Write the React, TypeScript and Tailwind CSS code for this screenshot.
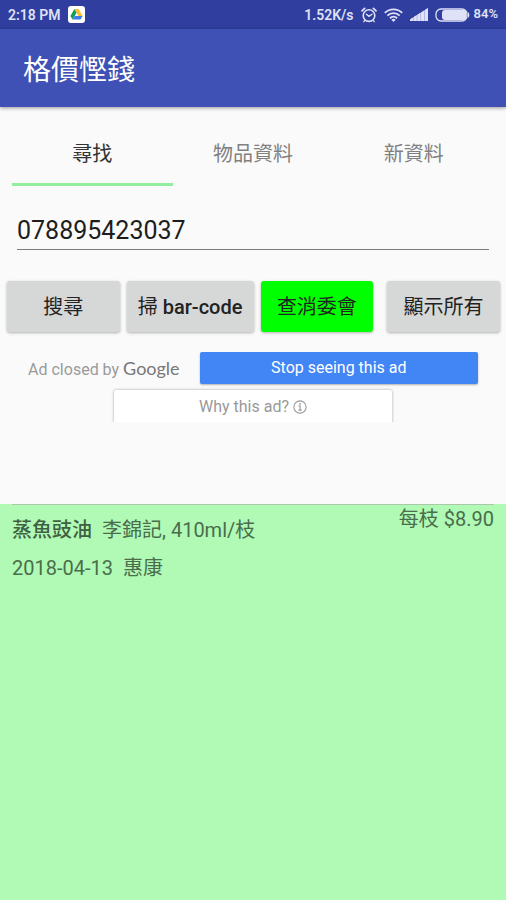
import React, { useState } from 'react';

const tabs = ['尋找', '物品資料', '新資料'];

const DriveIcon = () => (
  <svg className="h-[17px] w-[17px]" viewBox="0 0 17 17" aria-hidden="true">
    <rect width="17" height="17" rx="3" fill="#fff" />
    <path d="M6.4 3h4.2l4 7h-4.2z" fill="#fbc02d" />
    <path d="M6.4 3l2.1 3.7-3.9 6.8L2.4 10z" fill="#129d5a" />
    <path d="M6.6 10h8l-2.1 3.5H4.6z" fill="#3f7ee8" />
  </svg>
);

const AlarmIcon = () => (
  <svg className="h-4 w-4" viewBox="0 0 16 16" fill="none" stroke="currentColor" strokeLinecap="round" aria-hidden="true">
    <circle cx="8" cy="8.6" r="5.8" strokeWidth="1.6" />
    <path d="M1 3.8L3.6 1.4M15 3.8L12.4 1.4" strokeWidth="1.8" />
    <path d="M5.4 7.2L8 9.4l3-2.2" strokeWidth="1.4" />
    <path d="M3.8 13.4l-1 1.2M12.2 13.4l1 1.2" strokeWidth="1.4" />
  </svg>
);

const WifiIcon = () => (
  <svg className="h-[14px] w-[19px]" viewBox="0 0 19 14" fill="none" stroke="currentColor" strokeWidth="1.9" aria-hidden="true">
    <path d="M0.8 4.9a12.4 12.4 0 0 1 17.4 0" />
    <path d="M3.4 7.6a8.7 8.7 0 0 1 12.2 0" />
    <path d="M6 10.2a5 5 0 0 1 7 0" />
    <path d="M9.5 14L7.4 11.8a3 3 0 0 1 4.2 0z" fill="currentColor" stroke="none" />
  </svg>
);

const SignalIcon = () => (
  <svg className="h-[13px] w-[18px]" viewBox="0 0 18 13" fill="currentColor" aria-hidden="true">
    <path d="M0 13v-1.6L18 0v13z" opacity="0.65" />
    <path d="M0 11.4l3-1.9V13H0zM3.7 9l3-1.9V13h-3zM7.4 6.7l3-1.9V13h-3zM11.1 4.4l3-1.9V13h-3zM14.8 2L18 0v13h-3.2z" />
  </svg>
);

const BatteryIcon = () => (
  <svg className="h-[14px] w-[35px]" viewBox="0 0 35 14" aria-hidden="true">
    <rect x="1" y="1" width="31" height="12" rx="5" fill="none" stroke="currentColor" strokeWidth="1.3" />
    <rect x="7" y="2" width="24.4" height="10" rx="3" fill="currentColor" />
    <path d="M32.8 4c2 1.2 2 4.8 0 6z" fill="currentColor" />
  </svg>
);

const InfoIcon = () => (
  <svg className="h-[14px] w-[14px]" viewBox="0 0 13 13" fill="none" stroke="currentColor" aria-hidden="true">
    <circle cx="6.5" cy="6.5" r="5.7" />
    <path d="M5.2 5.7h1.5v3.6M5 9.4h3.2" />
    <circle cx="6.5" cy="3.7" r="0.8" fill="currentColor" stroke="none" />
  </svg>
);

const StatusBar: React.FC = () => (
  <div className="flex h-[29px] items-center justify-between bg-[#303f9f] px-2 text-sm font-semibold text-[#dfe1f6]">
    <div className="flex items-center gap-[7px]">
      <span>2:18 PM</span>
      <DriveIcon />
    </div>
    <div className="flex items-center gap-[7px]">
      <span>1.52K/s</span>
      <AlarmIcon />
      <WifiIcon />
      <SignalIcon />
      <div className="flex items-center gap-1">
        <BatteryIcon />
        <span className="text-[13px]">84%</span>
      </div>
    </div>
  </div>
);

const actionBase = 'h-[51px] rounded-[3px] text-xl text-[#222] whitespace-nowrap shadow-[0_1px_3px_rgba(0,0,0,0.3)]';

const App: React.FC = () => {
  const [active, setActive] = useState(0);
  const [query, setQuery] = useState('078895423037');

  return (
    <div className="flex min-h-screen flex-col bg-[#fafafa] font-[Roboto,'Noto_Sans_CJK_TC',sans-serif]">
      <StatusBar />
      <header className="flex h-[78px] items-center bg-[#3f51b5] px-[23px] pt-[6px] shadow-[0_1px_4px_rgba(0,0,0,0.4)]">
        <h1 className="text-[28px] leading-8 text-white">格價慳錢</h1>
      </header>

      <nav className="mx-3 mt-3 grid grid-cols-3">
        {tabs.map((tab, i) => (
          <button
            key={tab}
            type="button"
            onClick={() => setActive(i)}
            className={`h-[67px] border-b-[3px] pt-[6px] text-xl ${
              active === i ? 'border-[#90ee9c] text-[#333]' : 'border-transparent text-[#808080]'
            }`}
          >
            {tab}
          </button>
        ))}
      </nav>

      <div className="mt-6 px-[17px]">
        <input
          type="text"
          aria-label="尋找"
          value={query}
          onChange={(e) => setQuery(e.target.value)}
          className="h-10 w-full border-b border-[#7d7d7d] bg-transparent pt-[2px] text-[25px] text-[#1d1d1d] outline-none"
        />
      </div>

      <div className="mt-[31px] grid grid-cols-[16fr_18fr_16fr_17fr] gap-[7px] pr-[6px] pl-[7px]">
        <button type="button" className={`${actionBase} bg-[#d6d7d7]`}>搜尋</button>
        <button type="button" className={`${actionBase} bg-[#d6d7d7]`}>
          掃 <span className="font-medium">bar-code</span>
        </button>
        <button type="button" className={`${actionBase} bg-[#00ff00]`}>查消委會</button>
        <button type="button" className={`${actionBase} ml-[7px] bg-[#d6d7d7]`}>顯示所有</button>
      </div>

      <section className="mt-5 h-[70px] overflow-hidden">
        <div className="flex items-center justify-center gap-5">
          <p className="flex items-baseline gap-1 text-base text-[#9a9a9a]">
            Ad closed by
            <span className="font-[Lato,sans-serif] text-lg leading-7 text-[#777]">Google</span>
          </p>
          <button type="button" className="h-8 w-[55%] rounded-[2px] bg-[#4285f4] text-base text-white shadow-[0_1px_2px_rgba(0,0,0,0.3)]">
            Stop seeing this ad
          </button>
        </div>
        <button type="button" className="mx-auto mt-[6px] flex h-9 w-[55%] items-center justify-center gap-1 rounded-[2px] bg-white pb-[2px] text-base text-[#999] shadow-[0_0_3px_rgba(0,0,0,0.35)]">
          Why this ad?
          <InfoIcon />
        </button>
      </section>

      <main className="mt-[82px] flex-1 bg-[#b0fab5] text-xl text-[#4a6d4c]">
        <article className="mx-3 border-t border-[#a9c9aa]">
          <div className="flex items-start justify-between">
            <p className="mt-[9px] leading-8">
              <span className="mr-[10px] font-medium text-[#3f6141]">蒸魚豉油</span>
              李錦記, 410ml/枝
            </p>
            <p className="leading-7">每枝 $8.90</p>
          </div>
          <p className="mt-[6px] leading-8">
            <time className="mr-[10px]">2018-04-13</time>
            惠康
          </p>
        </article>
      </main>
    </div>
  );
};

export default App;
